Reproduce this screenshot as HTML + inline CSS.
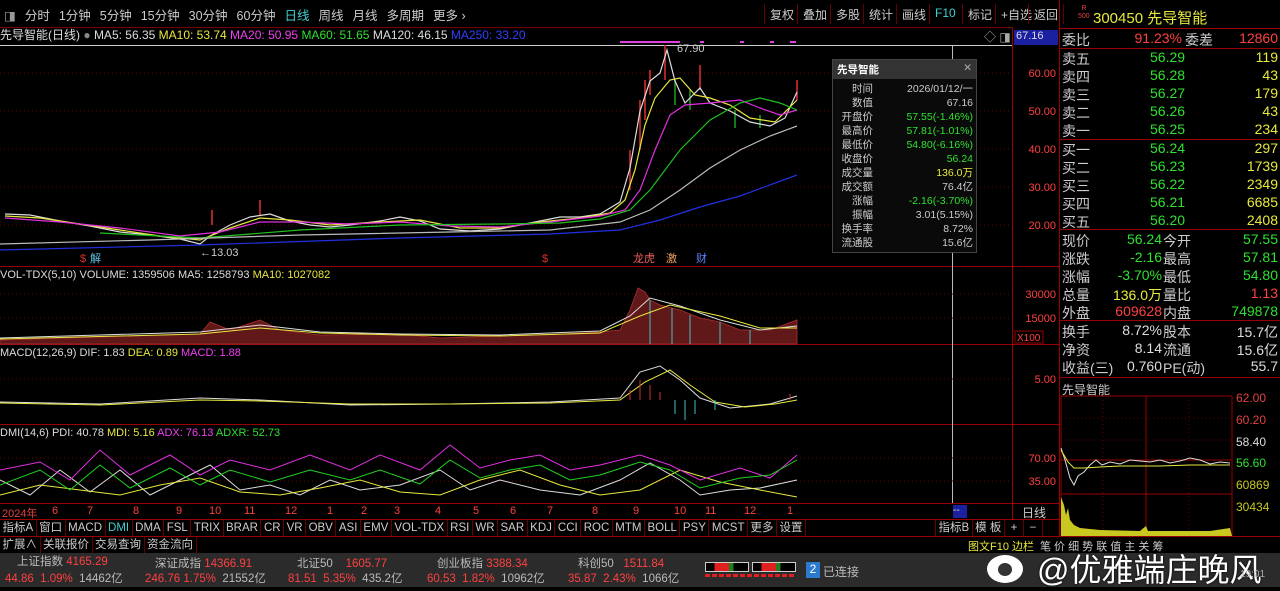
<!DOCTYPE html>
<html><head><meta charset="utf-8"><style>
*{margin:0;padding:0;box-sizing:border-box}
body{width:1280px;height:587px;background:#000;overflow:hidden;font-family:"Liberation Sans","Noto Sans CJK SC",sans-serif;color:#ccc;position:relative;font-size:12px}
.a{position:absolute;white-space:nowrap}
.r{color:#ff4040}.g{color:#30e030}.y{color:#e8e840}.w{color:#ddd}.c{color:#40d0d0}.m{color:#f040f0}.b{color:#3040ff}
.tb span{margin-right:9px}
.btn{position:absolute;top:4px;height:20px;border-left:1px solid #600;padding:2px 5px;font-size:12px}
.row{position:absolute;left:1062px;width:218px;height:18px;font-size:14px}
.row .l{position:absolute;left:0}.row .v{position:absolute;right:118px;text-align:right}
.row .l2{position:absolute;left:101px}.row .v2{position:absolute;right:2px}
.tab span{display:inline-block;border-right:1px solid #600;padding:0 2.5px}
</style></head><body>
<div class="a tb" style="left:4px;top:5px;font-size:12.5px"><span style="color:#999">◨</span><span>分时</span><span>1分钟</span><span>5分钟</span><span>15分钟</span><span>30分钟</span><span>60分钟</span><span class="c">日线</span><span>周线</span><span>月线</span><span>多周期</span><span>更多 ›</span></div>
<div class="btn" style="left:764px">复权</div><div class="btn" style="left:797px">叠加</div><div class="btn" style="left:830px">多股</div><div class="btn" style="left:863px">统计</div><div class="btn" style="left:896px">画线</div><div class="btn c" style="left:929px">F10</div><div class="btn" style="left:962px">标记</div><div class="btn" style="left:995px">+自选</div><div class="btn" style="left:1028px;border-right:1px solid #600">返回</div>
<div class="a" style="left:0;top:27px;width:1013px;height:1px;background:#700"></div>
<div class="a" style="left:0;top:26px;font-size:12px"><span class="w">先导智能(日线)</span> <span style="color:#888">●</span> <span class="w">MA5: 56.35</span> <span class="y">MA10: 53.74</span> <span class="m">MA20: 50.95</span> <span class="g">MA60: 51.65</span> <span class="w">MA120: 46.15</span> <span class="b">MA250: 33.20</span></div>
<div class="a" style="left:0;top:45px;width:1013px;height:1px;background:#ccc"></div>
<div class="a" style="left:1014px;top:30px;width:44px;height:15px;background:#1a20a0;color:#ddd;font-size:11px;padding-left:2px">67.16</div>
<div class="a" style="left:984px;top:28px;color:#aaa;font-size:12px">◇ ◨</div>
<div class="a" style="left:1012px;top:28px;width:1px;height:491px;background:#900"></div>
<div class="a" style="left:1059px;top:0;width:1px;height:536px;background:#900"></div>
<div class="a" style="left:0;top:266px;width:1060px;height:1px;background:#900"></div>
<div class="a" style="left:0;top:344px;width:1060px;height:1px;background:#900"></div>
<div class="a" style="left:0;top:424px;width:1060px;height:1px;background:#900"></div>
<div class="a" style="left:0;top:503px;width:1060px;height:1px;background:#900"></div>
<div class="a" style="left:0;top:519px;width:1060px;height:1px;background:#900"></div>
<div class="a" style="left:0;top:536px;width:1280px;height:1px;background:#900"></div>
<div class="a" style="left:952px;top:46px;width:1px;height:457px;background:#bbb"></div>
<svg class="a" style="left:0;top:0" width="1060" height="519">
<g stroke="#600" stroke-dasharray="1,3">
<line x1="0" y1="73" x2="1012" y2="73"/><line x1="0" y1="111" x2="1012" y2="111"/><line x1="0" y1="149" x2="1012" y2="149"/><line x1="0" y1="187" x2="1012" y2="187"/><line x1="0" y1="225" x2="1012" y2="225"/>
<line x1="0" y1="294" x2="1012" y2="294"/><line x1="0" y1="318" x2="1012" y2="318"/><line x1="0" y1="379" x2="1012" y2="379"/><line x1="0" y1="458" x2="1012" y2="458"/><line x1="0" y1="481" x2="1012" y2="481"/>
</g>
<g fill="#e040e0"><rect x="620" y="41" width="60" height="2"/><rect x="700" y="41" width="4" height="2"/><rect x="740" y="41" width="4" height="2"/><rect x="770" y="41" width="4" height="2"/><rect x="790" y="41" width="6" height="2"/></g>
<text x="677" y="52" fill="#ccc" font-size="11" font-family="Liberation Sans">67.90</text>
<g font-size="11" fill="#ff4040" font-family="Liberation Sans" text-anchor="end"><text x="1056" y="77">60.00</text><text x="1056" y="115">50.00</text><text x="1056" y="153">40.00</text><text x="1056" y="191">30.00</text><text x="1056" y="229">20.00</text><text x="1056" y="298">30000</text><text x="1056" y="322">15000</text><text x="1056" y="383">5.00</text><text x="1056" y="462">70.00</text><text x="1056" y="485">35.00</text></g>
<rect x="1015" y="331" width="28" height="12" fill="none" stroke="#900"/><text x="1017" y="341" fill="#ff4040" font-size="10">X100</text>
<g stroke="#e03030" stroke-width="1.5"><line x1="640" y1="100" x2="640" y2="150"/><line x1="645" y1="80" x2="645" y2="120"/><line x1="650" y1="70" x2="650" y2="95"/><line x1="665" y1="45" x2="665" y2="80"/><line x1="700" y1="65" x2="700" y2="90"/><line x1="797" y1="80" x2="797" y2="100"/><line x1="630" y1="150" x2="630" y2="190"/><line x1="212" y1="210" x2="212" y2="225"/><line x1="260" y1="200" x2="260" y2="215"/></g>
<g stroke="#20a020" stroke-width="1.5"><line x1="675" y1="80" x2="675" y2="105"/><line x1="690" y1="90" x2="690" y2="110"/><line x1="735" y1="110" x2="735" y2="128"/><line x1="760" y1="115" x2="760" y2="128"/></g>
<g fill="none" stroke-width="1.2">
<polyline stroke="#ddd" points="5,214 30,215 60,221 90,226 120,232 150,235 180,239 200,244 210,236 230,225 250,217 270,214 290,221 310,225 330,227 350,225 380,221 400,217 420,221 440,229 470,231 500,229 520,225 540,221 560,217 580,217 600,214 620,202 630,168 640,111 650,81 660,73 667,50 675,81 685,103 700,88 710,103 730,111 750,122 770,126 785,118 797,92"/>
<polyline stroke="#e8e840" points="5,216 40,218 80,224 120,230 160,236 200,240 230,228 260,218 290,220 330,225 380,222 420,220 460,228 500,228 540,222 580,218 610,213 625,200 635,170 645,125 655,98 670,80 680,78 695,95 710,98 730,105 750,118 775,122 797,100"/>
<polyline stroke="#e030e0" points="5,218 60,222 120,228 180,236 220,232 260,222 300,222 350,224 400,222 450,226 500,227 550,222 600,216 625,210 640,190 655,150 670,115 685,105 710,103 740,100 760,108 780,115 797,110"/>
<polyline stroke="#20c020" points="100,233 200,238 300,230 400,225 500,224 560,223 600,219 630,210 650,190 680,150 710,120 740,103 760,98 780,103 797,110"/>
<polyline stroke="#bbb" points="0,244 150,240 300,235 450,232 550,230 620,222 650,210 680,190 710,168 740,150 770,136 797,126"/>
<polyline stroke="#2030e0" points="0,250 200,245 400,238 550,234 620,230 660,220 700,207 740,196 797,175"/>
</g>
<text x="200" y="256" fill="#ccc" font-size="11">←13.03</text>
<text x="80" y="262" fill="#e03030" font-size="11">$</text><text x="90" y="262" fill="#60c0e0" font-size="11">解</text>
<text x="542" y="262" fill="#e03030" font-size="11">$</text>
<text x="633" y="262" fill="#f06060" font-size="11">龙虎</text><text x="666" y="262" fill="#f0a060" font-size="11">激</text><text x="696" y="262" fill="#6080ff" font-size="11">财</text>
<polygon fill="#601818" stroke="#b03030" stroke-width="0.8" points="0,340 100,337 200,334 210,322 230,330 260,320 280,330 320,335 400,334 440,338 500,336 560,334 600,332 620,330 630,310 638,288 645,292 650,300 660,305 680,310 700,318 720,322 740,330 770,330 797,320 797,344 0,344"/>
<g stroke="#40c0c0" stroke-width="1"><line x1="650" y1="300" x2="650" y2="344"/><line x1="672" y1="308" x2="672" y2="344"/><line x1="690" y1="315" x2="690" y2="344"/><line x1="720" y1="322" x2="720" y2="344"/><line x1="750" y1="330" x2="750" y2="344"/></g>
<polyline fill="none" stroke="#ddd" points="0,338 200,332 260,325 320,332 400,334 500,335 600,331 630,316 650,298 680,306 720,320 760,330 797,326"/>
<polyline fill="none" stroke="#e8e840" points="0,339 200,334 260,328 320,333 400,335 500,336 600,333 640,316 670,305 720,316 760,328 797,328"/>
<polyline fill="none" stroke="#ddd" points="0,402 100,404 200,398 260,400 350,405 450,404 550,402 620,398 640,372 660,366 680,380 700,398 730,408 770,404 797,396"/>
<polyline fill="none" stroke="#e8e840" points="0,403 100,405 200,400 260,401 350,404 450,404 550,403 620,400 645,382 670,370 690,385 715,402 745,407 775,404 797,400"/>
<g stroke="#d03030"><line x1="630" y1="400" x2="630" y2="390"/><line x1="640" y1="400" x2="640" y2="380"/><line x1="650" y1="400" x2="650" y2="385"/><line x1="660" y1="400" x2="660" y2="392"/><line x1="790" y1="400" x2="790" y2="394"/></g>
<g stroke="#40c0c0"><line x1="675" y1="400" x2="675" y2="414"/><line x1="685" y1="400" x2="685" y2="420"/><line x1="695" y1="400" x2="695" y2="414"/><line x1="715" y1="400" x2="715" y2="410"/></g>
<polyline fill="none" stroke="#ddd" points="0,480 30,495 60,470 90,492 120,470 150,495 180,480 210,465 240,490 270,485 300,495 330,480 360,490 400,485 440,470 470,490 500,480 540,490 580,495 620,480 650,463 680,480 700,495 730,490 760,488 797,480"/>
<polyline fill="none" stroke="#e8e840" points="0,495 40,485 80,490 120,495 160,485 200,478 240,492 280,495 320,488 360,480 400,492 440,495 480,480 520,470 560,485 600,495 640,490 680,470 720,482 760,490 797,497"/>
<polyline fill="none" stroke="#e030e0" points="0,470 40,462 70,480 100,450 130,475 170,455 200,475 230,460 270,470 310,455 350,470 380,455 420,470 450,445 480,468 510,460 540,455 570,470 600,465 640,455 670,465 700,480 740,468 770,478 797,455"/>
<polyline fill="none" stroke="#20d020" points="0,485 40,470 70,490 100,465 130,488 170,468 200,485 230,470 270,482 310,470 350,480 380,470 420,484 450,460 480,478 510,470 540,465 570,480 600,475 640,462 670,470 700,488 740,478 770,475 797,460"/>
</svg>
<div class="a" style="left:0;top:269px;font-size:11px"><span class="w">VOL-TDX(5,10)</span> <span class="w">VOLUME: 1359506</span> <span class="w">MA5: 1258793</span> <span class="y">MA10: 1027082</span></div>
<div class="a" style="left:0;top:347px;font-size:11px"><span class="w">MACD(12,26,9)</span> <span class="w">DIF: 1.83</span> <span class="y">DEA: 0.89</span> <span class="m">MACD: 1.88</span></div>
<div class="a" style="left:0;top:427px;font-size:11px"><span class="w">DMI(14,6)</span> <span class="w">PDI: 40.78</span> <span class="y">MDI: 5.16</span> <span class="m">ADX: 76.13</span> <span class="g">ADXR: 52.73</span></div>
<div class="a" style="left:832px;top:59px;width:145px;height:194px;background:#0a0a0a;border:1px solid #444;font-size:10.5px">
<div style="background:#333;height:19px;padding:2px 4px;color:#fff;font-weight:bold">先导智能<span style="float:right;color:#aaa;font-weight:normal">✕</span></div>
<div style="position:relative;line-height:14px;padding-top:3px">
<div class="a" style="left:4px;top:3px;color:#ccc;text-align:right;width:36px">时间<br>数值<br>开盘价<br>最高价<br>最低价<br>收盘价<br>成交量<br>成交额<br>涨幅<br>振幅<br>换手率<br>流通股</div>
<div class="a" style="right:3px;top:3px;text-align:right"><span>2026/01/12/一</span><br>67.16<br><span class="g">57.55(-1.46%)</span><br><span class="g">57.81(-1.01%)</span><br><span class="g">54.80(-6.16%)</span><br><span class="g">56.24</span><br><span class="y">136.0万</span><br>76.4亿<br><span class="g">-2.16(-3.70%)</span><br>3.01(5.15%)<br>8.72%<br>15.6亿</div>
</div></div>
<div class="a" style="left:2px;top:505px;font-size:11px;color:#e04040">2024年</div>
<div class="a r" style="top:505px;font-size:11px;left:0;width:1000px">
<span class="a" style="left:52px">6</span><span class="a" style="left:87px">7</span><span class="a" style="left:133px">8</span><span class="a" style="left:176px">9</span><span class="a" style="left:209px">10</span><span class="a" style="left:244px">11</span><span class="a" style="left:285px">12</span><span class="a" style="left:327px">1</span><span class="a" style="left:361px">2</span><span class="a" style="left:394px">3</span><span class="a" style="left:435px">4</span><span class="a" style="left:473px">5</span><span class="a" style="left:510px">6</span><span class="a" style="left:547px">7</span><span class="a" style="left:592px">8</span><span class="a" style="left:633px">9</span><span class="a" style="left:674px">10</span><span class="a" style="left:705px">11</span><span class="a" style="left:744px">12</span><span class="a" style="left:787px">1</span></div>
<div class="a" style="left:953px;top:505px;width:14px;height:13px;background:#1a20a0;font-size:10px;color:#ddd">--</div>
<div class="a" style="left:1022px;top:504px;font-size:12px">日线</div>
<div class="a tab" style="left:0;top:520px;font-size:11.5px;line-height:16px"><span>指标A</span><span>窗口</span><span>MACD</span><span class="c">DMI</span><span>DMA</span><span>FSL</span><span>TRIX</span><span>BRAR</span><span>CR</span><span>VR</span><span>OBV</span><span>ASI</span><span>EMV</span><span>VOL-TDX</span><span>RSI</span><span>WR</span><span>SAR</span><span>KDJ</span><span>CCI</span><span>ROC</span><span>MTM</span><span>BOLL</span><span>PSY</span><span>MCST</span><span>更多</span><span>设置</span></div>
<div class="a tab" style="left:935px;top:520px;font-size:11.5px;line-height:16px"><span style="border-left:1px solid #600">指标B</span><span>模 板</span><span>&nbsp;+&nbsp;</span><span>&nbsp;−&nbsp;</span></div>
<div class="a tab" style="left:0;top:537px;font-size:11.5px;line-height:16px"><span>扩展∧</span><span>关联报价</span><span>交易查询</span><span>资金流向</span></div>
<div class="a y" style="left:968px;top:538px;font-size:11px">图文F10 边栏</div>
<div class="a" style="left:1040px;top:538px;font-size:11px">笔 价 细 势 联 值 主 关 筹</div>
<div class="a" style="left:0;top:553px;width:1280px;height:34px;background:#2b2b2b"></div>
<div class="a" style="left:17px;top:555px;font-size:11.5px;line-height:15px"><span style="color:#bbb">上证指数</span> <span class="r">4165.29</span></div>
<div class="a" style="left:5px;top:570px;font-size:11.5px"><span class="r">44.86&nbsp; 1.09%</span>&nbsp;&nbsp;<span style="color:#bbb">14462亿</span></div>
<div class="a" style="left:155px;top:555px;font-size:11.5px"><span style="color:#bbb">深证成指</span> <span class="r">14366.91</span></div>
<div class="a" style="left:145px;top:570px;font-size:11.5px"><span class="r">246.76 1.75%</span>&nbsp;&nbsp;<span style="color:#bbb">21552亿</span></div>
<div class="a" style="left:297px;top:555px;font-size:11.5px"><span style="color:#bbb">北证50</span>&nbsp;&nbsp;&nbsp; <span class="r">1605.77</span></div>
<div class="a" style="left:288px;top:570px;font-size:11.5px"><span class="r">81.51&nbsp; 5.35%</span>&nbsp;&nbsp;<span style="color:#bbb">435.2亿</span></div>
<div class="a" style="left:437px;top:555px;font-size:11.5px"><span style="color:#bbb">创业板指</span> <span class="r">3388.34</span></div>
<div class="a" style="left:427px;top:570px;font-size:11.5px"><span class="r">60.53&nbsp; 1.82%</span>&nbsp;&nbsp;<span style="color:#bbb">10962亿</span></div>
<div class="a" style="left:578px;top:555px;font-size:11.5px"><span style="color:#bbb">科创50</span>&nbsp;&nbsp; <span class="r">1511.84</span></div>
<div class="a" style="left:568px;top:570px;font-size:11.5px"><span class="r">35.87&nbsp; 2.43%</span>&nbsp;&nbsp;<span style="color:#bbb">1066亿</span></div>
<div class="a" style="left:705px;top:562px;width:44px;height:10px;border:1px solid #ccc;background:linear-gradient(90deg,#000 20%,#e02020 20%,#e02020 55%,#208020 55%,#208020 65%,#000 65%)"></div>
<div class="a" style="left:752px;top:562px;width:44px;height:10px;border:1px solid #ccc;background:linear-gradient(90deg,#000 20%,#e02020 20%,#e02020 55%,#208020 55%,#208020 65%,#000 65%)"></div>
<div class="a" style="left:705px;top:574px;width:91px;height:3px;background:repeating-linear-gradient(90deg,#e02020 0 5px,transparent 5px 7px)"></div>
<div class="a" style="left:806px;top:562px;width:14px;height:16px;background:#2a7ad0;color:#fff;font-size:12px;text-align:center">2</div>
<div class="a" style="left:823px;top:563px;font-size:12px;color:#bbb">已连接</div>
<div class="a" style="left:987px;top:555px;width:36px;height:28px;border-radius:50%;background:#fff"></div>
<div class="a" style="left:998px;top:563px;width:14px;height:13px;border-radius:50%;background:#333"></div>
<div class="a" style="left:1037px;top:545px;font-size:32px;color:#fff;text-shadow:0 0 2px #000">@优雅端庄晚风</div>
<div class="a" style="left:1240px;top:569px;font-size:10px;color:#aaa">19:01</div>
<div class="a" style="left:1078px;top:5px;font-size:7px;color:#e04040;line-height:8px;text-align:center">R<br>500</div>
<div class="a y" style="left:1093px;top:7px;font-size:15px">300450 先导智能</div>
<div class="a" style="left:1060px;top:28px;width:220px;height:1px;background:#900"></div>
<div class="row" style="top:30px"><span class="l">委比</span><span class="v r" style="right:98px">91.23%</span><span class="l2" style="left:123px">委差</span><span class="v2 r">12860</span></div>
<div class="a" style="left:1060px;top:48px;width:220px;height:1px;background:#900"></div>
<div class="row" style="top:49px"><span class="l">卖五</span><span class="v g" style="left:0;right:auto;margin-left:88px">56.29</span><span class="v2 y">119</span></div>
<div class="row" style="top:67px"><span class="l">卖四</span><span class="v g" style="left:0;right:auto;margin-left:88px">56.28</span><span class="v2 y">43</span></div>
<div class="row" style="top:85px"><span class="l">卖三</span><span class="v g" style="left:0;right:auto;margin-left:88px">56.27</span><span class="v2 y">179</span></div>
<div class="row" style="top:103px"><span class="l">卖二</span><span class="v g" style="left:0;right:auto;margin-left:88px">56.26</span><span class="v2 y">43</span></div>
<div class="row" style="top:121px"><span class="l">卖一</span><span class="v g" style="left:0;right:auto;margin-left:88px">56.25</span><span class="v2 y">234</span></div>
<div class="a" style="left:1060px;top:139px;width:220px;height:1px;background:#900"></div>
<div class="row" style="top:140px"><span class="l">买一</span><span class="v g" style="left:0;right:auto;margin-left:88px">56.24</span><span class="v2 y">297</span></div>
<div class="row" style="top:158px"><span class="l">买二</span><span class="v g" style="left:0;right:auto;margin-left:88px">56.23</span><span class="v2 y">1739</span></div>
<div class="row" style="top:176px"><span class="l">买三</span><span class="v g" style="left:0;right:auto;margin-left:88px">56.22</span><span class="v2 y">2349</span></div>
<div class="row" style="top:194px"><span class="l">买四</span><span class="v g" style="left:0;right:auto;margin-left:88px">56.21</span><span class="v2 y">6685</span></div>
<div class="row" style="top:212px"><span class="l">买五</span><span class="v g" style="left:0;right:auto;margin-left:88px">56.20</span><span class="v2 y">2408</span></div>
<div class="a" style="left:1060px;top:229px;width:220px;height:1px;background:#900"></div>
<div class="row" style="top:231px"><span class="l">现价</span><span class="v g">56.24</span><span class="l2">今开</span><span class="v2 g">57.55</span></div>
<div class="row" style="top:249px"><span class="l">涨跌</span><span class="v g">-2.16</span><span class="l2">最高</span><span class="v2 g">57.81</span></div>
<div class="row" style="top:267px"><span class="l">涨幅</span><span class="v g">-3.70%</span><span class="l2">最低</span><span class="v2 g">54.80</span></div>
<div class="row" style="top:285px"><span class="l">总量</span><span class="v y">136.0万</span><span class="l2">量比</span><span class="v2 r">1.13</span></div>
<div class="row" style="top:303px"><span class="l">外盘</span><span class="v r">609628</span><span class="l2">内盘</span><span class="v2 g">749878</span></div>
<div class="a" style="left:1060px;top:320px;width:220px;height:1px;background:#900"></div>
<div class="row" style="top:322px"><span class="l">换手</span><span class="v w">8.72%</span><span class="l2">股本</span><span class="v2 w">15.7亿</span></div>
<div class="row" style="top:340px"><span class="l">净资</span><span class="v w">8.14</span><span class="l2">流通</span><span class="v2 w">15.6亿</span></div>
<div class="row" style="top:358px"><span class="l">收益(三)</span><span class="v w">0.760</span><span class="l2">PE(动)</span><span class="v2 w">55.7</span></div>
<div class="a" style="left:1060px;top:377px;width:220px;height:1px;background:#900"></div>
<div class="a" style="left:1062px;top:381px;font-size:12px">先导智能</div>
<svg class="a" style="left:1060px;top:390px" width="220" height="146">
<rect x="1" y="6" width="171" height="140" fill="none" stroke="#900"/>
<g stroke="#900"><line x1="1" y1="70" x2="172" y2="70"/><line x1="1" y1="104" x2="172" y2="104"/><line x1="86" y1="6" x2="86" y2="146"/></g>
<g stroke="#600" stroke-dasharray="1,3"><line x1="1" y1="28" x2="172" y2="28"/><line x1="1" y1="50" x2="172" y2="50"/><line x1="43" y1="6" x2="43" y2="146"/><line x1="129" y1="6" x2="129" y2="146"/></g>
<polyline fill="none" stroke="#ddd" points="1,58 5,70 10,88 14,95 18,86 24,82 30,75 36,70 42,75 50,72 60,74 70,70 80,71 90,72 100,70 110,73 120,71 130,68 140,70 150,74 160,72 170,73"/>
<polyline fill="none" stroke="#e8e840" points="1,60 8,72 14,78 24,78 40,77 60,76 100,76 130,75 170,75"/>
<polygon fill="#c8c820" points="1,107 4,115 6,125 8,118 10,130 14,135 20,138 40,140 80,141 86,136 88,141 120,141 150,141 170,138 172,146 1,146"/>
<g font-size="12" font-family="Liberation Sans"><text x="176" y="12" fill="#e04040">62.00</text><text x="176" y="34" fill="#e04040">60.20</text><text x="176" y="56" fill="#ddd">58.40</text><text x="176" y="77" fill="#30e030">56.60</text><text x="176" y="99" fill="#c8c820">60869</text><text x="176" y="121" fill="#c8c820">30434</text></g>
</svg>
</body></html>
